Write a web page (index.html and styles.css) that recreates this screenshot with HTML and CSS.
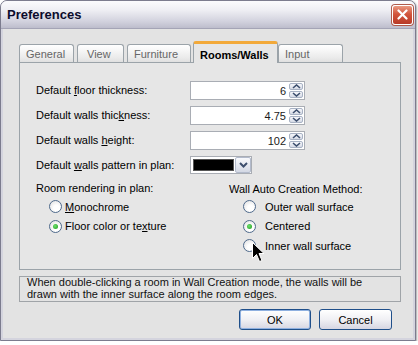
FILE: index.html
```html
<!DOCTYPE html>
<html lang="en">
<head>
    <meta charset="UTF-8" />
    <title>Preferences</title>
    <link rel="stylesheet" href="styles.css">
</head>
<body>
    <div class="window">
        <div class="titlebar">
            <span class="title">Preferences</span>
            <button class="close" aria-label="Close">
                <svg width="11" height="11" viewBox="0 0 11 11"><path d="M1.5 1.5 L9.5 9.5 M9.5 1.5 L1.5 9.5" stroke="#fff" stroke-width="2.2" stroke-linecap="round"/></svg>
            </button>
        </div>

        <div class="client">
            <div class="tabs">
                <div class="tab">General</div>
                <div class="tab">View</div>
                <div class="tab">Furniture</div>
                <div class="tab active">Rooms/Walls</div>
                <div class="tab">Input</div>
            </div>

            <div class="panel">
                <div class="fields">
                    <label>Default <u>f</u>loor thickness:</label>
                    <div class="spin">
                        <span class="value">6</span>
                        <span class="arrows">
                            <span class="arrow"><svg width="9" height="5" viewBox="0 0 9 5"><path d="M1 4 L4.5 1 L8 4" fill="none" stroke="#3d4f6e" stroke-width="1.6"/></svg></span>
                            <span class="arrow"><svg width="9" height="5" viewBox="0 0 9 5"><path d="M1 1 L4.5 4 L8 1" fill="none" stroke="#3d4f6e" stroke-width="1.6"/></svg></span>
                        </span>
                    </div>

                    <label>Default walls thic<u>k</u>ness:</label>
                    <div class="spin">
                        <span class="value">4.75</span>
                        <span class="arrows">
                            <span class="arrow"><svg width="9" height="5" viewBox="0 0 9 5"><path d="M1 4 L4.5 1 L8 4" fill="none" stroke="#3d4f6e" stroke-width="1.6"/></svg></span>
                            <span class="arrow"><svg width="9" height="5" viewBox="0 0 9 5"><path d="M1 1 L4.5 4 L8 1" fill="none" stroke="#3d4f6e" stroke-width="1.6"/></svg></span>
                        </span>
                    </div>

                    <label>Default walls <u>h</u>eight:</label>
                    <div class="spin">
                        <span class="value">102</span>
                        <span class="arrows">
                            <span class="arrow"><svg width="9" height="5" viewBox="0 0 9 5"><path d="M1 4 L4.5 1 L8 4" fill="none" stroke="#3d4f6e" stroke-width="1.6"/></svg></span>
                            <span class="arrow"><svg width="9" height="5" viewBox="0 0 9 5"><path d="M1 1 L4.5 4 L8 1" fill="none" stroke="#3d4f6e" stroke-width="1.6"/></svg></span>
                        </span>
                    </div>

                    <label>Default <u>w</u>alls pattern in plan:</label>
                    <div class="combo">
                        <span class="swatch"></span>
                        <span class="drop"><svg width="9" height="6" viewBox="0 0 9 6"><path d="M1 1 L4.5 4.5 L8 1" fill="none" stroke="#3d4f6e" stroke-width="2"/></svg></span>
                    </div>
                </div>

                <div class="groups">
                    <div class="group">
                        <div class="group-title">Room rendering in plan:</div>
                        <label class="option"><input type="radio" name="render"><span><u>M</u>onochrome</span></label>
                        <label class="option"><input type="radio" name="render" checked><span>Floor color or te<u>x</u>ture</span></label>
                    </div>
                    <div class="group wall">
                        <div class="group-title">Wall Auto Creation Method:</div>
                        <label class="option"><input type="radio" name="method"><span>Outer wall surface</span></label>
                        <label class="option"><input type="radio" name="method" checked><span>Centered</span></label>
                        <label class="option"><input type="radio" name="method"><span>Inner wall surface</span></label>
                    </div>
                </div>

                <svg class="cursor" width="13" height="21" viewBox="0 0 13 21">
                    <path d="M0.5 0.5 L0.5 16.5 L4.5 12.5 L7.5 19.5 L10 18.5 L7 11.5 L12 11.5 Z" fill="#000" stroke="#fff" stroke-width="1"/>
                </svg>
            </div>

            <div class="info">
                When double-clicking a room in Wall Creation mode, the walls will be<br>
                drawn with the inner surface along the room edges.
            </div>

            <div class="buttons">
                <button class="btn default">OK</button>
                <button class="btn">Cancel</button>
            </div>
        </div>
    </div>
</body>
</html>
```

FILE: styles.css
```css
body {
    margin: 0;
    background: #fff;
    font-family: "Liberation Sans", Arial, sans-serif;
    font-size: 11px;
    color: #000;
}
.window {
    width: 416px;
    height: 341px;
    box-sizing: border-box;
    border: 1px solid #7c7c8e;
    border-radius: 7px 7px 0 0;
    background: #d4d4de;
    display: flex;
    flex-direction: column;
    overflow: hidden;
    box-shadow: 1px 1px 2px rgba(0, 0, 0, 0.35);
}
.titlebar {
    height: 28px;
    flex: none;
    display: flex;
    align-items: center;
    justify-content: space-between;
    padding: 0 2px 0 6px;
    background: linear-gradient(#fbfbfd 0%, #eeeef3 35%, #d2d2de 75%, #bdbdcc 100%);
    border-bottom: 1px solid #a4a4b6;
    box-sizing: border-box;
}
.title {
    font-size: 13px;
    font-weight: bold;
    color: #0c0c2c;
}
.close {
    width: 21px;
    height: 20px;
    padding: 0;
    border: 1px solid #fff;
    border-radius: 3px;
    background: linear-gradient(#e99a82, #d2553c 45%, #b83a28);
    display: flex;
    align-items: center;
    justify-content: center;
    box-shadow: 0 0 0 1px #b05a4a;
}
.client {
    flex: 1;
    margin: 0 2px 2px 2px;
    background: #e3e3e3;
    padding: 12px 12px 0 16px;
    display: flex;
    flex-direction: column;
}
.tabs {
    display: flex;
    align-items: flex-end;
    height: 21px;
}
.tab {
    height: 18px;
    box-sizing: border-box;
    padding: 3px 0 0 6px;
    margin-right: 3px;
    border: 1px solid #9ba3a9;
    border-bottom: none;
    border-radius: 3px 3px 0 0;
    background: linear-gradient(#ffffff, #ececec 70%, #e0e0e0);
    color: #666;
}
.tab:nth-child(1) { width: 55px; }
.tab:nth-child(2) { width: 47px; padding-left: 9px; }
.tab:nth-child(3) { width: 64px; margin-right: 2px; }
.tab:nth-child(4) { width: 85px; margin-right: 0; }
.tab:nth-child(5) { width: 65px; }
.tab.active {
    height: 22px;
    margin-bottom: -1px;
    position: relative;
    z-index: 1;
    padding-top: 5px;
    background: #e6e6e6;
    border-top: 3px solid #f2a93a;
    color: #000;
    font-weight: bold;
}
.panel {
    position: relative;
    height: 208px;
    box-sizing: border-box;
    border: 1px solid #9ba3a9;
    background: #e6e6e6;
    padding: 18px 16px 0 16px;
}
.fields {
    display: grid;
    grid-template-columns: 154px auto;
    grid-auto-rows: 25px;
    align-items: start;
}
.fields label {
    line-height: 19px;
}
.spin {
    width: 115px;
    height: 19px;
    box-sizing: border-box;
    border: 1px solid #a9adb4;
    background: #fff;
    display: flex;
    align-items: center;
    justify-content: flex-end;
    padding: 0 1px;
}
.value {
    padding-right: 3px;
    color: #1a1a1a;
}
.arrows {
    display: flex;
    flex-direction: column;
    gap: 1px;
}
.arrow {
    width: 14px;
    height: 7px;
    box-sizing: border-box;
    border: 1px solid #a8b2c4;
    border-radius: 2px;
    background: linear-gradient(#f6f7fb, #d6dbe6);
    display: flex;
    align-items: center;
    justify-content: center;
}
.combo {
    width: 62px;
    height: 18px;
    box-sizing: border-box;
    border: 1px solid #a9adb4;
    background: #fff;
    display: flex;
    align-items: center;
    padding-left: 2px;
}
.swatch {
    width: 41px;
    height: 12px;
    background: #000;
    border: 1px solid #555;
    box-sizing: border-box;
}
.drop {
    width: 16px;
    height: 16px;
    margin-left: auto;
    box-sizing: border-box;
    border: 1px solid #b2bacb;
    border-radius: 2px;
    background: linear-gradient(#f8f9fc, #d3d8e4);
    display: flex;
    align-items: center;
    justify-content: center;
}
.groups {
    display: flex;
}
.group {
    flex: none;
    width: 193px;
    display: flex;
    flex-direction: column;
}
.group.wall {
    flex: 1;
    width: auto;
}
.group-title {
    line-height: 14px;
    margin-bottom: 2px;
}
.option {
    display: flex;
    align-items: center;
    height: 19.5px;
    padding-left: 13px;
    gap: 3px;
}
.wall .group-title {
    margin-top: 1px;
    margin-bottom: 1px;
}
.wall .option {
    padding-left: 14px;
    gap: 9px;
}
.option input {
    appearance: none;
    -webkit-appearance: none;
    width: 13px;
    height: 13px;
    margin: 0;
    border: 1px solid #4f6a8c;
    border-radius: 50%;
    background: radial-gradient(circle at 60% 65%, #ffffff 30%, #dcdcdc 100%);
    display: grid;
    place-items: center;
}
.option input:checked::after {
    content: "";
    width: 5px;
    height: 5px;
    border-radius: 50%;
    background: radial-gradient(circle at 40% 40%, #6ee06e, #1c9a1c);
}
.cursor {
    position: absolute;
    left: 232px;
    top: 179px;
}
.info {
    margin-top: 6px;
    height: 26px;
    box-sizing: border-box;
    border: 1px solid #a0a4a8;
    padding: 0 0 0 7px;
    line-height: 11.5px;
    color: #111;
}
.buttons {
    display: flex;
    justify-content: flex-end;
    gap: 8px;
    padding-right: 9px;
    margin-top: 7px;
}
.btn {
    width: 73px;
    height: 21px;
    font-family: "Liberation Sans", Arial, sans-serif;
    font-size: 11px;
    color: #000;
    border: 1px solid #1f4f8a;
    border-radius: 3px;
    background: linear-gradient(#ffffff, #f0f0f4 50%, #d6d6e2);
    padding: 0;
}
.btn.default {
    width: 72px;
    box-shadow: inset 0 0 0 1px #8fb0e0;
}
```
